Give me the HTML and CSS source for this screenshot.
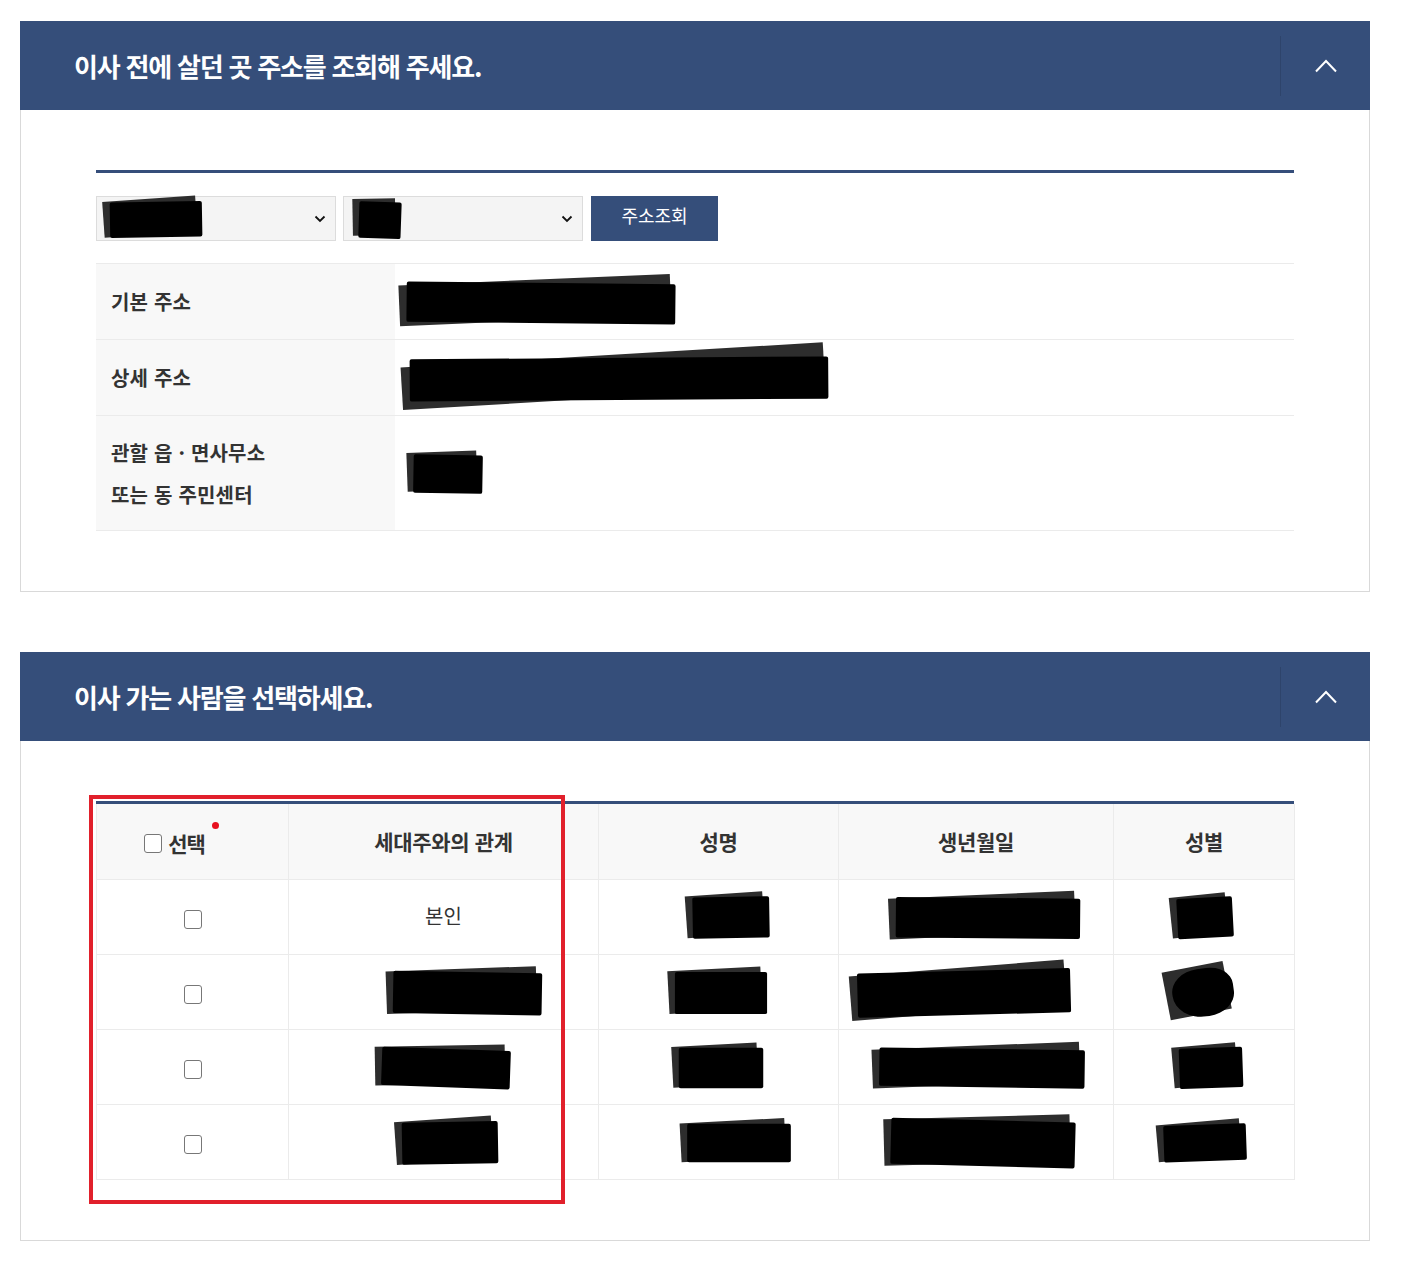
FILE: index.html
```html
<!DOCTYPE html>
<html lang="ko">
<head>
<meta charset="utf-8">
<title>전입신고</title>
<link rel="stylesheet" href="styles.css">
</head>
<body>
<div class="page">
  <section class="panel">
    <header class="panel-head">
      <h2 class="panel-title">이사 전에 살던 곳 주소를 조회해 주세요.</h2>
      <button class="toggle" type="button" aria-label="접기">
        <svg width="24" height="14" viewBox="0 0 24 14"><polyline points="2,12.5 12,2 22,12.5" fill="none" stroke="#fff" stroke-width="2"/></svg>
      </button>
    </header>
    <div class="panel-body">
      <div class="inner">
        <div class="search-row">
          <div class="fake-select">
            <span class="redact" style="--w:96px;--h:37px;--r:-1deg"></span>
            <svg class="caret" width="12" height="8" viewBox="0 0 12 8"><polyline points="1.5,1.5 6,6 10.5,1.5" fill="none" stroke="#111" stroke-width="1.8"/></svg>
          </div>
          <div class="fake-select">
            <span class="redact" style="--w:44px;--h:38px;--r:2deg"></span>
            <svg class="caret" width="12" height="8" viewBox="0 0 12 8"><polyline points="1.5,1.5 6,6 10.5,1.5" fill="none" stroke="#111" stroke-width="1.8"/></svg>
          </div>
          <button class="btn-search" type="button">주소조회</button>
        </div>
        <table class="info">
          <tr class="row-std">
            <th>기본 주소</th>
            <td><span class="redact" style="--w:280px;--h:42px;--r:0.6deg"></span></td>
          </tr>
          <tr class="row-std">
            <th>상세 주소</th>
            <td><span class="redact" style="--w:436px;--h:44px;--r:-0.4deg"></span></td>
          </tr>
          <tr class="row-tall">
            <th>관할 읍 · 면사무소<br>또는 동 주민센터</th>
            <td><span class="redact" style="--w:72px;--h:40px;--x:11px;--r:1deg"></span></td>
          </tr>
        </table>
      </div>
    </div>
  </section>

  <section class="panel">
    <header class="panel-head">
      <h2 class="panel-title">이사 가는 사람을 선택하세요.</h2>
      <button class="toggle" type="button" aria-label="접기">
        <svg width="24" height="14" viewBox="0 0 24 14"><polyline points="2,12.5 12,2 22,12.5" fill="none" stroke="#fff" stroke-width="2"/></svg>
      </button>
    </header>
    <div class="panel-body">
      <div class="inner table-wrap">
        <table class="people">
          <colgroup>
            <col class="c-sel"><col class="c-rel"><col class="c-name"><col class="c-birth"><col class="c-sex">
          </colgroup>
          <thead>
            <tr>
              <th class="th-sel"><span class="chk chk-sm"></span><span class="req">선택</span></th>
              <th>세대주와의 관계</th>
              <th>성명</th>
              <th>생년월일</th>
              <th>성별</th>
            </tr>
          </thead>
          <tbody>
            <tr>
              <td><span class="chk"></span></td>
              <td class="plain">본인</td>
              <td><span class="redact" style="--w:80px;--h:43px;--x:9px;--r:-1deg"></span></td>
              <td><span class="redact" style="--w:192px;--h:42px;--x:9px;--r:0.5deg"></span></td>
              <td><span class="redact" style="--w:58px;--h:42px;--x:-2px;--r:-3deg"></span></td>
            </tr>
            <tr>
              <td><span class="chk"></span></td>
              <td><span class="redact" style="--w:155px;--h:44px;--x:21px;--r:1deg"></span></td>
              <td><span class="redact" style="--w:96px;--h:44px;--x:-1px;--r:0deg"></span></td>
              <td><span class="redact" style="--w:222px;--h:46px;--x:-15px;--r:-1.5deg"></span></td>
              <td><span class="redact round" style="--w:64px;--h:50px;--x:-4px;--r:-8deg"></span></td>
            </tr>
            <tr>
              <td><span class="chk"></span></td>
              <td><span class="redact" style="--w:134px;--h:40px;--x:-1px;--r:2deg"></span></td>
              <td><span class="redact" style="--w:88px;--h:42px;--x:-1px;--r:0deg"></span></td>
              <td><span class="redact" style="--w:214px;--h:40px;--x:3px;--r:0.8deg"></span></td>
              <td><span class="redact" style="--w:66px;--h:42px;--x:4px;--r:-2deg"></span></td>
            </tr>
            <tr>
              <td><span class="chk"></span></td>
              <td><span class="redact" style="--w:100px;--h:44px;--x:3px;--r:-1deg"></span></td>
              <td><span class="redact" style="--w:108px;--h:40px;--x:17px;--r:0deg"></span></td>
              <td><span class="redact" style="--w:192px;--h:48px;--x:4px;--r:1.5deg"></span></td>
              <td><span class="redact" style="--w:86px;--h:38px;--x:-2px;--r:-2deg"></span></td>
            </tr>
          </tbody>
        </table>
        <div class="highlight"></div>
      </div>
    </div>
  </section>
</div>
</body>
</html>
```

FILE: styles.css
```css
* { box-sizing: border-box; }

html, body {
  margin: 0;
  padding: 0;
  background: #fff;
}

body {
  font-family: "Noto Sans CJK KR", "Noto Sans", sans-serif;
  color: #333;
}

.page {
  width: 1350px;
  margin-left: 20px;
  padding-top: 21px;
  padding-bottom: 28px;
  display: flex;
  flex-direction: column;
  gap: 60px;
}

.panel-head {
  height: 89px;
  background: #354e7a;
  display: flex;
  align-items: center;
  justify-content: space-between;
  padding-left: 54px;
}

.panel-title {
  margin: 0;
  color: #fff;
  font-size: 26px;
  font-weight: 700;
  letter-spacing: -1.2px;
  line-height: 1;
  padding-top: 1px;
}

.toggle {
  width: 90px;
  height: 60px;
  border: 0;
  border-left: 1px solid rgba(0, 0, 0, 0.12);
  background: transparent;
  padding: 0;
  display: flex;
  align-items: center;
  justify-content: center;
  cursor: pointer;
}

.panel-body {
  border: 1px solid #d9d9d9;
  border-top: 0;
  padding: 60px 75px;
}

.inner {
  border-top: 3px solid #354e7a;
}

/* search row */
.search-row {
  display: flex;
  gap: 7px;
  margin-top: 23px;
  margin-bottom: 22px;
  height: 45px;
}

.fake-select {
  width: 240px;
  height: 45px;
  background: #f4f4f4;
  border: 1px solid #dcdcdc;
  display: flex;
  align-items: center;
  justify-content: space-between;
  padding: 0 9px 0 8px;
}

.fake-select + .fake-select {
  padding-left: 11px;
}

.btn-search {
  width: 127px;
  height: 45px;
  margin-left: 1px;
  border: 0;
  background: #354e7a;
  color: #fff;
  font-family: "Noto Sans CJK KR", sans-serif;
  font-size: 18px;
  letter-spacing: 0;
  padding: 0 0 7px;
}

/* info table */
.info {
  width: 100%;
  border-collapse: collapse;
}

.info th,
.info td {
  border-top: 1px solid #ebebeb;
  border-bottom: 1px solid #ebebeb;
}

.info th {
  width: 299px;
  background: #f8f8f8;
  text-align: left;
  font-size: 20px;
  font-weight: 700;
  color: #333;
  letter-spacing: 0.2px;
  word-spacing: 0;
  padding: 0 15px;
  line-height: 42px;
}

.info td {
  padding: 0 0 0 3px;
}

.row-std th,
.row-std td { height: 76px; }

.row-tall th,
.row-tall td { height: 115px; }

.row-tall th { padding-top: 2px; }

/* people table */
.table-wrap {
  position: relative;
}

.people {
  width: 100%;
  border-collapse: collapse;
  table-layout: fixed;
}

.c-sel { width: 192px; }
.c-rel { width: 310px; }
.c-name { width: 240px; }
.c-birth { width: 275px; }
.c-sex { width: 181px; }

.people th,
.people td {
  border: 1px solid #ebebeb;
  text-align: center;
  vertical-align: middle;
  height: 75px;
  padding: 0;
}

.people thead th {
  border-top: 0;
  background: #f8f8f8;
  font-size: 21px;
  font-weight: 700;
  letter-spacing: -0.3px;
  color: #333;
  padding-bottom: 0;
}

.people thead th.th-sel {
  padding-right: 36px;
  letter-spacing: -1px;
}

.people td.plain {
  font-size: 20px;
  color: #333;
  padding-bottom: 2px;
}

.chk {
  display: inline-block;
  width: 18px;
  height: 19px;
  border: 1.5px solid #777;
  border-radius: 3px;
  background: #fff;
  vertical-align: middle;
  margin-top: 0;
}

.chk-sm {
  width: 18px;
  height: 19px;
  margin-right: 6px;
  position: relative;
  top: 1px;
}

.req {
  position: relative;
  vertical-align: middle;
}

.req::after {
  content: "";
  position: absolute;
  right: -14px;
  top: -6px;
  width: 7px;
  height: 7px;
  border-radius: 50%;
  background: #e8101f;
}

.highlight {
  position: absolute;
  left: -7px;
  top: -9px;
  width: 476px;
  height: 409px;
  border: 4px solid #e1202b;
  pointer-events: none;
}

/* redaction blobs */
.redact {
  display: inline-block;
  position: relative;
  width: var(--w);
  height: var(--h);
  vertical-align: middle;
  transform: translateX(var(--x, 0)) rotate(var(--r, 0deg));
}

.redact::before,
.redact::after {
  content: "";
  position: absolute;
  inset: 0;
}

.redact::before {
  background: #2d2d2d;
  transform: rotate(-3deg) translate(-3px, -2px) scale(0.97);
}

.redact::after {
  background: #000;
  border-radius: 2px;
  transform: translate(3px, 1px) scale(0.96);
}

.redact.round::after {
  border-radius: 45% 40% 45% 50%;
}

.caret { flex: none; }
```
